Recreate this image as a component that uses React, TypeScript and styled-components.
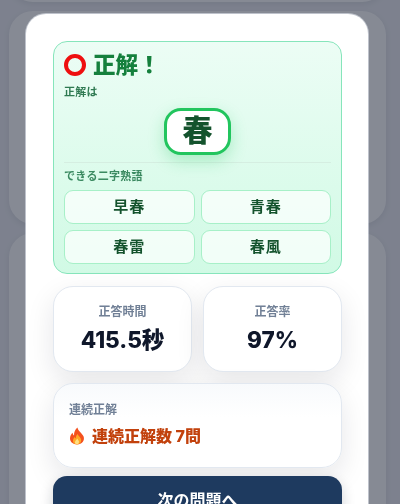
import React from 'react';
import styled, { createGlobalStyle } from 'styled-components';

const Global = createGlobalStyle`
  html, body {
    margin: 0;
    height: 100%;
    overflow: hidden;
    background: #eaebf2;
    font-family: Inter, "Noto Sans CJK JP", sans-serif;
  }
  * { box-sizing: border-box; }
`;

const Page = styled.div`
  height: 704px;
  margin-top: -200px;
  display: flex;
  flex-direction: column;
  gap: 9px;
  padding: 0 14px 0 9px;
`;
const PageCard = styled.div<{ $h: number }>`
  flex: none;
  height: ${(p) => p.$h}px;
  background: #fdfdff;
  border-radius: 24px;
  box-shadow: 0 2px 6px rgba(15, 23, 42, 0.08);
`;

const Overlay = styled.div`
  position: fixed;
  inset: 0;
  background: rgba(15, 23, 42, 0.5);
  padding: 14px 32px 0 26px;
  overflow: hidden;
`;
const Modal = styled.div`
  background: #fff;
  border-radius: 20px;
  padding: 27px 26px 24px 27px;
  height: 560px;
  display: flex;
  flex-direction: column;
  gap: 12px;
  box-shadow: 0 0 0 1px rgba(226, 232, 240, 0.6);
`;

const ResultPanel = styled.section`
  height: 233px;
  border: 1px solid #86e5bb;
  border-radius: 14px;
  background: linear-gradient(180deg, #ecfdf5 0%, #d1fae5 100%);
  padding: 0 10px;
`;
const Heading = styled.h2`
  margin: 0;
  padding-top: 9px;
  display: flex;
  align-items: center;
  gap: 7px;
  height: 36px;
  font-size: 22.5px;
  line-height: 28px;
  font-weight: 900;
  color: #15803d;
`;
const Ring = styled.span`
  width: 22px;
  height: 22px;
  border-radius: 50%;
  border: 4px solid #ee0f0f;
`;
const SmallLabel = styled.div`
  margin-top: 7px;
  font-size: 11px;
  line-height: 14px;
  font-weight: 700;
  color: #2f7a52;
  letter-spacing: 0.3px;
`;
const AnswerRow = styled.div`
  display: flex;
  justify-content: center;
  margin-top: 9px;
`;
const AnswerKanji = styled.div`
  width: 67px;
  height: 47px;
  border: 3px solid #22c55e;
  border-radius: 17px;
  background: #fff;
  box-shadow: 0 6px 16px rgba(34, 197, 94, 0.28);
  display: flex;
  align-items: center;
  justify-content: center;
  padding-bottom: 3px;
  font-size: 30px;
  line-height: 30px;
  font-weight: 900;
  color: #14532d;
`;
const Divider = styled.hr`
  margin: 7px 0 0;
  border: 0;
  height: 1px;
  background: #d5eee1;
`;
const WordsLabel = styled(SmallLabel)`
  margin-top: 6px;
  color: #3b8a61;
`;
const WordGrid = styled.div`
  margin-top: 7px;
  display: grid;
  grid-template-columns: 1fr 1fr;
  gap: 6px;
`;
const Word = styled.div`
  height: 34px;
  border: 1px solid #a7f0c8;
  border-radius: 9px;
  background: rgba(255, 255, 255, 0.7);
  display: flex;
  align-items: center;
  justify-content: center;
  font-size: 15px;
  line-height: 20px;
  font-weight: 700;
  letter-spacing: 1px;
  color: #14532d;
`;

const StatGrid = styled.div`
  display: grid;
  grid-template-columns: 1fr 1fr;
  gap: 11px;
`;
const StatCard = styled.div`
  height: 86px;
  background: #fff;
  border: 1px solid #e2e8f0;
  border-radius: 20px;
  box-shadow: 0 10px 28px rgba(15, 23, 42, 0.1);
  display: flex;
  flex-direction: column;
  align-items: center;
  padding-top: 17px;
`;
const StatLabel = styled.div`
  font-size: 12px;
  line-height: 16px;
  font-weight: 700;
  color: #718096;
`;
const StatValue = styled.div`
  margin-top: 6px;
  font-size: 22.5px;
  line-height: 28px;
  font-weight: 800;
  color: #0f172a;
`;
const StreakCard = styled.div`
  height: 85px;
  margin-top: -1px;
  background: linear-gradient(180deg, #f8fafc 0%, #fff 40%);
  border: 1px solid #e2e8f0;
  border-radius: 20px;
  box-shadow: 0 10px 28px rgba(15, 23, 42, 0.1);
  padding: 18px 15px;
`;
const StreakRow = styled.div`
  margin-top: 6px;
  display: flex;
  align-items: center;
  gap: 7px;
  font-size: 16px;
  line-height: 24px;
  font-weight: 800;
  color: #c2410c;
`;
const NextButton = styled.button`
  flex: none;
  height: 46px;
  margin-top: -4px;
  border: 0;
  border-radius: 14px;
  background: #1e3a5f;
  color: #fff;
  font-family: inherit;
  font-size: 16px;
  font-weight: 700;
  padding: 0;
  display: block;
  box-shadow: 0 6px 14px rgba(15, 23, 42, 0.2);
`;

const Flame = () => (
  <svg width="16" height="18" viewBox="0 0 16 18">
    <path d="M8.5 0.5C9 4 13 6 14.6 9.6C16 13.6 13 17.5 8 17.5C3.2 17.5 0.2 14 1.2 9.8C1.7 8 2.6 6.8 3.6 5.8C3.8 7.2 4.3 8 5 8.4C4.9 5.2 6.2 2.4 8.5 0.5Z" fill="#f4511e" />
    <path d="M8.6 7C9.2 9 12 10.4 12.2 13C12.3 15.6 10.4 17.4 8 17.4C5.6 17.4 3.7 15.6 4 13.2C4.2 11.6 5.2 10.8 5.8 10C6 10.8 6.3 11.3 6.8 11.5C6.8 9.8 7.4 8.2 8.6 7Z" fill="#ffa726" />
    <path d="M8.2 11.5C8.6 12.8 10.2 13.4 10 15C9.8 16.6 8.9 17.4 8 17.4C6.8 17.4 5.9 16.4 6 15.2C6.1 13.6 7.6 13 8.2 11.5Z" fill="#ffe082" />
  </svg>
);

export default function App() {
  return (
    <>
      <Global />
      <Page>
        <PageCard $h={202} />
        <PageCard $h={213} />
        <PageCard $h={300} />
      </Page>
      <Overlay>
        <Modal>
          <ResultPanel>
            <Heading>
              <Ring />
              正解！
            </Heading>
            <SmallLabel>正解は</SmallLabel>
            <AnswerRow>
              <AnswerKanji>春</AnswerKanji>
            </AnswerRow>
            <Divider />
            <WordsLabel>できる二字熟語</WordsLabel>
            <WordGrid>
              {['早春', '青春', '春雷', '春風'].map((w) => (
                <Word key={w}>{w}</Word>
              ))}
            </WordGrid>
          </ResultPanel>
          <StatGrid>
            <StatCard>
              <StatLabel>正答時間</StatLabel>
              <StatValue>415.5秒</StatValue>
            </StatCard>
            <StatCard>
              <StatLabel>正答率</StatLabel>
              <StatValue>97%</StatValue>
            </StatCard>
          </StatGrid>
          <StreakCard>
            <StatLabel>連続正解</StatLabel>
            <StreakRow>
              <Flame />
              連続正解数 7問
            </StreakRow>
          </StreakCard>
          <NextButton>次の問題へ</NextButton>
        </Modal>
      </Overlay>
    </>
  );
}
